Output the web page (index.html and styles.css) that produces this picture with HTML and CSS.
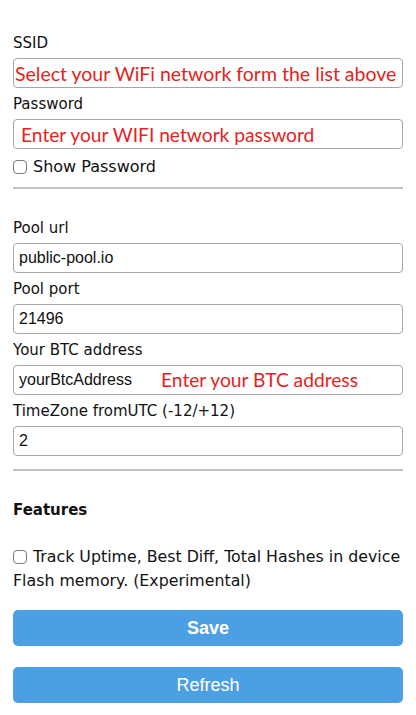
FILE: index.html
```html
<!DOCTYPE html>
<html lang="en">
<head>
<meta charset="utf-8">
<title>WiFi Config</title>
<link rel="stylesheet" href="styles.css">
</head>
<body>
<form class="page">
  <label class="lbl">SSID</label>
  <input class="field note note-ssid" type="text" value="Select your WiFi network form the list above">
  <label class="lbl">Password</label>
  <input class="field note note-pass" type="text" value="Enter your WIFI network password">
  <label class="check"><input class="box" type="checkbox"><span>Show Password</span></label>
  <hr class="rule">

  <div class="pool">
    <label class="lbl">Pool url</label>
    <input class="field" type="text" value="public-pool.io">
    <label class="lbl">Pool port</label>
    <input class="field" type="text" value="21496">
    <label class="lbl">Your BTC address</label>
    <div class="wrap">
      <input class="field" type="text" value="yourBtcAddress">
      <span class="hint">Enter your BTC address</span>
    </div>
    <label class="lbl">TimeZone fromUTC (-12/+12)</label>
    <input class="field" type="text" value="2">
  </div>
  <hr class="rule rule-low">

  <h3 class="features">Features</h3>
  <label class="check multi"><input class="box" type="checkbox">Track Uptime, Best Diff, Total Hashes in device Flash memory. (Experimental)</label>

  <button class="btn btn-save" type="button">Save</button>
  <button class="btn btn-refresh" type="button">Refresh</button>
</form>
</body>
</html>
```

FILE: styles.css
```css
html, body {
  margin: 0;
  padding: 0;
  background: #ffffff;
}

.page {
  display: flex;
  flex-direction: column;
  padding: 33px 13px 0 13px;
  font-family: "DejaVu Sans", Verdana, sans-serif;
  font-size: 15px;
  color: #111111;
}

.lbl {
  display: block;
  height: 20px;
  line-height: 20px;
  margin-bottom: 5px;
}

.field {
  box-sizing: border-box;
  width: 100%;
  height: 30px;
  margin: 0 0 6px 0;
  padding: 0 5px;
  border: 1px solid #a6a6a6;
  border-radius: 4px;
  background: #ffffff;
  font-family: "Liberation Sans", Arial, sans-serif;
  font-size: 16px;
  color: #111111;
  outline: none;
}

.note {
  font-family: Lato, "Open Sans", sans-serif;
  font-size: 19.2px;
  color: #e5231d;
}

.note-ssid {
  padding-left: 1px;
  font-size: 19.5px;
}

.note-pass {
  padding-left: 7px;
}

.check {
  display: flex;
  align-items: center;
  height: 20px;
  line-height: 20px;
  margin-top: 2px;
  font-size: 16px;
}

.box {
  appearance: none;
  -webkit-appearance: none;
  box-sizing: border-box;
  width: 14px;
  height: 14px;
  margin: 0 6px 0 0;
  border: 1px solid #7a7a7a;
  border-radius: 4px;
  background: #ffffff;
  flex: none;
}

.rule {
  height: 2px;
  margin: 10px 0 0 0;
  border: 0;
  background: #c2c2c2;
}

.pool {
  display: flex;
  flex-direction: column;
  margin-top: 29px;
}

.wrap {
  position: relative;
}

.hint {
  position: absolute;
  left: 148px;
  top: 2px;
  line-height: 26px;
  font-family: Lato, "Open Sans", sans-serif;
  font-size: 19.2px;
  color: #e5231d;
}

.rule-low {
  margin-top: 7px;
}

.features {
  margin: 29px 0 0 0;
  height: 20px;
  line-height: 20px;
  font-size: 15px;
  font-weight: bold;
}

.check.multi {
  display: block;
  height: auto;
  line-height: 23.5px;
  margin-top: 25px;
  font-size: 15.8px;
}

.check.multi .box {
  vertical-align: -2px;
}

.btn {
  box-sizing: border-box;
  width: 100%;
  height: 36px;
  border: 0;
  border-radius: 5px;
  background: #4c9fe2;
  color: #ffffff;
  font-family: "Liberation Sans", Arial, sans-serif;
  font-size: 18px;
  padding: 0;
}

.btn-save {
  margin-top: 18px;
  font-weight: bold;
}

.btn-refresh {
  margin-top: 21px;
  font-weight: normal;
}
```
